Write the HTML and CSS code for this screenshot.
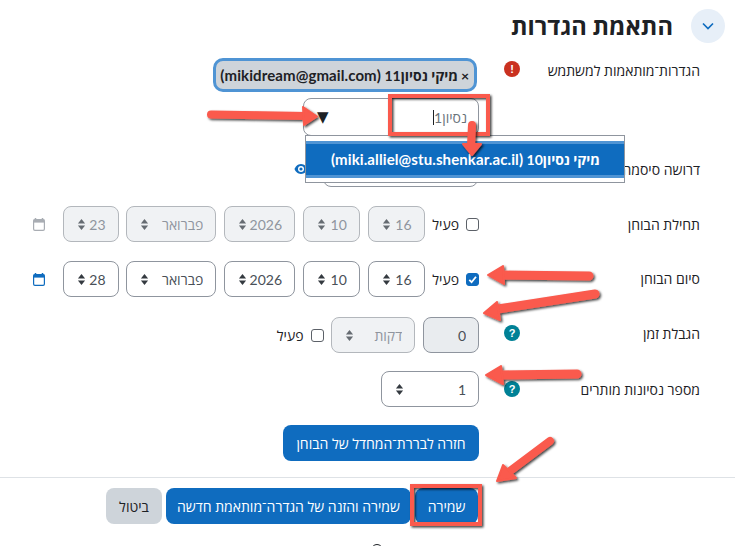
FILE: index.html
```html
<!DOCTYPE html>
<html lang="he" dir="rtl">
<head>
<meta charset="utf-8">
<title>התאמת הגדרות</title>
<link rel="stylesheet" href="styles.css">
</head>
<body>
<main class="page">
  <header class="head">
    <span class="toggle"><svg width="14" height="14" viewBox="0 0 14 14"><path d="M2 4.500 7 9.500 12 4.500" fill="none" stroke="#0f6cbf" stroke-width="1.700"/></svg></span>
    <h2 class="title">התאמת הגדרות</h2>
  </header>

  <section class="form">
    <div class="row row-user">
      <div class="label">הגדרות־מותאמות למשתמש</div>
      <div class="ic"><span class="badge alert">!</span></div>
      <div class="ctl stack">
        <span class="chip"><span>×</span> <span>מיקי נסיון11 <span class="lat">(mikidream@gmail.com)</span></span></span>
        <div class="search"><span class="typed">נסיון1</span><span class="caret"></span><span class="tri">▼</span></div>
      </div>
    </div>

    <div class="row row-pass">
      <div class="label">דרושה סיסמה</div>
      <div class="ic"></div>
      <div class="ctl passrow">
        <input class="field pass" type="text" aria-label="סיסמה">
        <svg class="eye" width="14" height="12" viewBox="0 0 14 12"><path d="M7 1C3.500 1 1.200 4 .5 6c.7 2 3 5 6.500 5s5.800-3 6.500-5C12.800 4 10.500 1 7 1Z" fill="#0f6cbf"/><circle cx="7" cy="6" r="3" fill="#fff"/><circle cx="7" cy="6" r="1.600" fill="#0f6cbf"/></svg>
      </div>
    </div>

    <div class="row">
      <div class="label">תחילת הבוחן</div>
      <div class="ic"></div>
      <div class="ctl dates off">
        <label class="check"><input type="checkbox"><span>פעיל</span></label>
        <select class="sel w57" disabled><option>16</option></select>
        <select class="sel w57" disabled><option>10</option></select>
        <select class="sel w71" disabled><option>2026</option></select>
        <select class="sel w90" disabled><option>פברואר</option></select>
        <select class="sel w56" disabled><option>23</option></select>
        <svg class="cal" width="12" height="13" viewBox="0 0 12 13"><path d="M2.500 0v2M9.500 0v2" stroke="#a9adb3" stroke-width="1.500"/><rect x=".6" y="1.600" width="10.800" height="10.800" rx="1.300" fill="#fff" stroke="#a9adb3" stroke-width="1.200"/><rect x=".6" y="1.600" width="10.800" height="3" fill="#a9adb3"/></svg>
      </div>
    </div>

    <div class="row">
      <div class="label up1">סיום הבוחן</div>
      <div class="ic"></div>
      <div class="ctl dates on">
        <label class="check"><input type="checkbox" checked><span>פעיל</span></label>
        <select class="sel w57"><option>16</option></select>
        <select class="sel w57"><option>10</option></select>
        <select class="sel w71"><option>2026</option></select>
        <select class="sel w90"><option>פברואר</option></select>
        <select class="sel w56"><option>28</option></select>
        <svg class="cal" width="12" height="13" viewBox="0 0 12 13"><path d="M2.500 0v2M9.500 0v2" stroke="#0f6cbf" stroke-width="1.500"/><rect x=".6" y="1.600" width="10.800" height="10.800" rx="1.300" fill="#fff" stroke="#0f6cbf" stroke-width="1.200"/><rect x=".6" y="1.600" width="10.800" height="3" fill="#0f6cbf"/></svg>
      </div>
    </div>

    <div class="row row-limit">
      <div class="label low">הגבלת זמן</div>
      <div class="ic low"><span class="badge help">?</span></div>
      <div class="ctl dates">
        <input class="field num" type="text" value="0" disabled>
        <select class="sel w84" disabled><option>דקות</option></select>
        <label class="check"><input type="checkbox"><span>פעיל</span></label>
      </div>
    </div>

    <div class="row row-tries">
      <div class="label">מספר נסיונות מותרים</div>
      <div class="ic"><span class="badge help">?</span></div>
      <div class="ctl"><select class="sel w98"><option>1</option></select></div>
    </div>

    <div class="row row-back">
      <div class="label"></div>
      <div class="ic"></div>
      <div class="ctl"><button class="btn primary wide" type="button">חזרה לבררת־המחדל של הבוחן</button></div>
    </div>
  </section>

  <hr class="rule">

  <footer class="actions">
    <button class="btn primary w63" type="button">שמירה</button>
    <button class="btn primary w245" type="button">שמירה והזנה של הגדרה־מותאמת חדשה</button>
    <button class="btn muted" type="button">ביטול</button>
  </footer>
</main>

<div class="dropdown"><div class="opt"><span>מיקי נסיון10 <span class="lat">(miki.alliel@stu.shenkar.ac.il)</span></span></div></div>
<span class="peek"></span>

<svg class="notes" width="735" height="546" viewBox="0 0 735 546" aria-hidden="true">
  <defs><filter id="sh" x="-20%" y="-20%" width="140%" height="140%"><feDropShadow dx="1.500" dy="1.500" stdDeviation="1.300" flood-color="#000" flood-opacity=".75"/></filter></defs>
  <g filter="url(#sh)">
    <rect x="390" y="96" width="98" height="38" fill="none" stroke="#fa5a4d" stroke-width="4"/>
    <rect x="412" y="486" width="68" height="38" fill="none" stroke="#fa5a4d" stroke-width="4"/>
  </g>
  <g filter="url(#sh)" fill="#fa5a4d" stroke="#fa5a4d" stroke-linejoin="round">
    <path d="M211 114.500 306 116" stroke-width="8" stroke-linecap="round"/>
    <path d="M303 107 317 116.500 304 125Z" stroke-width="2"/>
    <path d="M472 125 471 146" stroke-width="8" stroke-linecap="round"/>
    <path d="M463 144 481 144 472 155Z" stroke-width="2"/>
    <path d="M589 276 501 275" stroke-width="9" stroke-linecap="round"/>
    <path d="M503 266 488 275 504 284Z" stroke-width="2"/>
    <path d="M595 294 498 309" stroke-width="9" stroke-linecap="round"/>
    <path d="M497 302 484 313 500 320Z" stroke-width="2"/>
    <path d="M577 374 500 375" stroke-width="9" stroke-linecap="round"/>
    <path d="M501 366 486 375 503 384Z" stroke-width="2"/>
    <path d="M550 441 510 471" stroke-width="8" stroke-linecap="round"/>
    <path d="M503 465 497 481 516 478Z" stroke-width="2"/>
  </g>
</svg>
</body>
</html>
```

FILE: styles.css
```css
* { box-sizing: border-box; }
html, body { margin: 0; height: 546px; overflow: hidden; background: #fff; }
body {
  position: relative;
  font-family: Lato, "Open Sans", "Liberation Sans", sans-serif;
  font-size: 14px;
  color: #1d2125;
}
.lat { font-size: 15px; letter-spacing: .1px; }
.head { display: flex; align-items: flex-start; gap: 18px; padding: 9px 10px 0 0; height: 58px; }
.toggle { width: 34px; height: 34px; border-radius: 50%; background: #e7eff8; display: flex; align-items: center; justify-content: center; flex: none; }
.title { margin: 0; font-size: 23.7px; font-weight: 700; line-height: 34px; }
.form { display: flex; flex-direction: column; gap: 19px; padding-right: 35px; }
.row { display: flex; min-height: 36px; align-items: center; }
.label { width: 170px; flex: none; }
.up1 { padding-bottom: 2px; }
.low { padding-bottom: 4px; }
.ic { width: 51px; flex: none; display: flex; padding-right: 10px; }
.ctl { flex: 1; display: flex; align-items: center; }
.stack { flex-direction: column; align-items: flex-start; gap: 6px; }
.row-user { align-items: flex-start; }
.row-user .label { padding-top: 3px; }
.row-user .ic { padding-top: 3px; }
.row-pass { margin-top: -4px; }
.row-limit { margin-top: 1px; margin-bottom: -1px; }
.badge { width: 16px; height: 16px; border-radius: 50%; color: #fff; font-size: 11px; font-weight: 700; display: flex; align-items: center; justify-content: center; font-family: "Liberation Sans", sans-serif; }
.alert { background: #ca3120; }
.help { background: #008196; }
.chip { height: 34px; width: 264px; margin-right: 2px; border: 3px solid #4f94d4; border-radius: 10px; background: #ced4da; font-weight: 700; display: flex; align-items: center; padding: 0 5px; white-space: nowrap; gap: 3px; }
.search { position: relative; width: 176px; height: 38px; border: 1px solid #8f959e; border-radius: 8px; display: flex; align-items: center; padding-right: 11px; background: #fff; color: #6a737b; }
.caret { width: 1px; height: 15px; background: #1d2125; }
.tri { margin-right: auto; margin-left: 13px; font-size: 15px; color: #1d2125; font-family: "DejaVu Sans", sans-serif; }
.field { height: 36px; border: 1px solid #8f959e; border-radius: 8px; background: #fff; font: inherit; color: inherit; padding: 0 12px; }
.pass { width: 155px; margin-right: 1px; }
.eye { margin-right: 15px; }
.passrow { align-items: center; }
.dates { gap: 7.75px; }
.num { width: 56px; background: #e9ecef; color: #495057; text-align: right; }
.check { display: flex; align-items: center; gap: 7px; }
.check input { appearance: none; width: 13px; height: 13px; margin: 0; border: 1px solid #5c6168; border-radius: 3px; background: #fff; }
.check input:checked {
  background: #0f6cbf center/11px no-repeat url("data:image/svg+xml,%3Csvg xmlns='http://www.w3.org/2000/svg' viewBox='0 0 12 12'%3E%3Cpath d='M2.500 6.500 5 9l4.800-6' fill='none' stroke='%23fff' stroke-width='2'/%3E%3C/svg%3E");
  border-color: #0f6cbf;
}
.sel {
  appearance: none;
  height: 36px;
  border: 1px solid #8f959e;
  border-radius: 8px;
  font: inherit;
  color: #495057;
  background: #fff left 13px center/9px 13px no-repeat url("data:image/svg+xml,%3Csvg xmlns='http://www.w3.org/2000/svg' viewBox='0 0 10 14'%3E%3Cpath d='M5 1 9 6H1ZM5 13 1 8H9Z' fill='%23343a40'/%3E%3C/svg%3E");
  padding: 0 12px 0 24px;
}
.sel:disabled {
  background-color: #f0f2f4;
  border-color: #b3b7bc;
  color: #8f959e;
  opacity: 1;
  background-image: url("data:image/svg+xml,%3Csvg xmlns='http://www.w3.org/2000/svg' viewBox='0 0 10 14'%3E%3Cpath d='M5 1 9 6H1ZM5 13 1 8H9Z' fill='%23666c72'/%3E%3C/svg%3E");
}
.w56 { width: 56px; }
.w57 { width: 57px; }
.w71 { width: 71px; }
.w84 { width: 84px; }
.w90 { width: 90px; }
.w98 { width: 98px; }
.cal { margin-right: 10px; }
.btn { height: 36px; border: 0; border-radius: 8px; font: inherit; padding: 0 12px; white-space: nowrap; }
.primary { background: #0f6cbf; color: #fff; }
.muted { background: #ced4da; color: #1d2125; width: 56px; padding: 0; }
.wide { width: 196px; padding: 0; }
.w63 { width: 63px; padding: 0; }
.w245 { width: 245px; padding: 0; }
.row-back { margin-top: -1px; }
.rule { margin: 16px 0 10px; border: 0; border-top: 1px solid #dee2e6; }
.actions { display: flex; gap: 4px; padding-right: 257px; }
.dropdown { position: absolute; left: 305px; top: 135px; width: 320px; height: 48px; border: 1px solid #8f959e; background: #fff; padding-top: 5px; }
.opt { height: 37px; background: #0f6cbf; border-block: 3px solid #4f94d4; color: #fff; font-weight: 700; display: flex; align-items: center; padding-right: 24px; white-space: nowrap; }
.peek { position: absolute; left: 371px; top: 544px; width: 12px; height: 12px; border: 1px solid #1d2125; border-radius: 50%; }
.notes { position: absolute; left: 0; top: 0; pointer-events: none; }
```
